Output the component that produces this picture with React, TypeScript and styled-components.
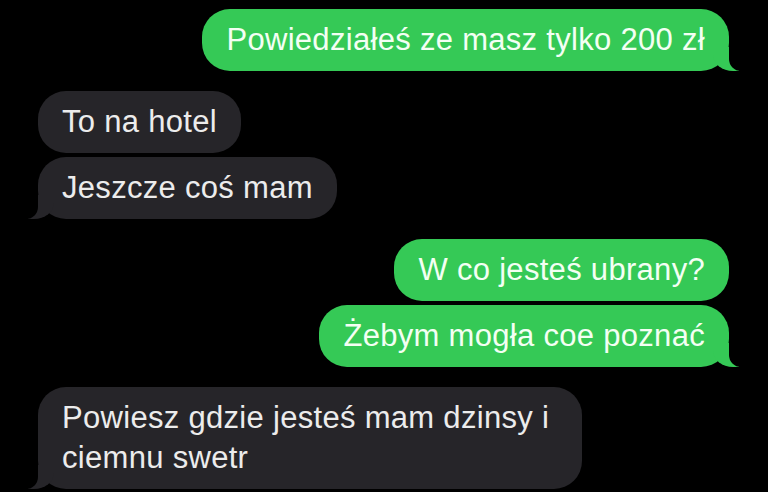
import React from 'react';
import styled, { createGlobalStyle, css } from 'styled-components';

type Side = 'me' | 'them';

interface Message {
	text: string
}

interface Group {
	side: Side
	messages: Message[]
}

const GREEN = '#35c956';
const GRAY = '#262529';

const GlobalStyle = createGlobalStyle`
	html, body {
		margin: 0;
		padding: 0;
		background: #000;
	}
	body {
		width: 768px;
		height: 492px;
		overflow: hidden;
		font-family: 'Liberation Sans', Arial, sans-serif;
	}
`;

const Thread = styled.div`
	display: flex;
	flex-direction: column;
	gap: 20px;
	padding: 9px 39px 0 38px;
	box-sizing: border-box;
	width: 768px;
	height: 492px;
	background: #000;
`;

const GroupColumn = styled.div<{ $side: Side }>`
	display: flex;
	flex-direction: column;
	gap: 4px;
	align-items: ${(p) => (p.$side === 'me' ? 'flex-end' : 'flex-start')};
`;

const meTail = css`
	&::before {
		right: -10px;
		border-bottom-left-radius: 20px 16px;
	}
	&::after {
		right: -36px;
		border-bottom-left-radius: 12px;
	}
`;

const themTail = css`
	&::before {
		left: -10px;
		border-bottom-right-radius: 20px 16px;
	}
	&::after {
		left: -36px;
		border-bottom-right-radius: 12px;
	}
`;

const Bubble = styled.div<{ $side: Side; $tail: boolean }>`
	position: relative;
	max-width: 544px;
	padding: 11px 24px;
	box-sizing: border-box;
	border-radius: 28px;
	font-size: 31px;
	line-height: 40px;
	letter-spacing: 0.3px;
	background: ${(p) => (p.$side === 'me' ? GREEN : GRAY)};
	color: ${(p) => (p.$side === 'me' ? '#f3fff3' : '#ececec')};

	${(p) => p.$tail && css`
		&::before,
		&::after {
			content: '';
			position: absolute;
			bottom: 0;
			height: 24px;
		}
		&::before {
			width: 26px;
			background: ${p.$side === 'me' ? GREEN : GRAY};
		}
		&::after {
			width: 36px;
			background: #000;
		}
		${p.$side === 'me' ? meTail : themTail}
	`}
`;

const groups: Group[] = [
	{ side: 'me', messages: [{ text: 'Powiedziałeś ze masz tylko 200 zł' }] },
	{ side: 'them', messages: [{ text: 'To na hotel' }, { text: 'Jeszcze coś mam' }] },
	{ side: 'me', messages: [{ text: 'W co jesteś ubrany?' }, { text: 'Żebym mogła coe poznać' }] },
	{ side: 'them', messages: [{ text: 'Powiesz gdzie jesteś mam dzinsy i ciemnu swetr' }] },
];

const App = () => (
	<>
		<GlobalStyle />
		<Thread>
			{groups.map((g, gi) => (
				<GroupColumn key={gi} $side={g.side}>
					{g.messages.map((m, mi) => (
						<Bubble key={mi} $side={g.side} $tail={mi === g.messages.length - 1}>
							{m.text}
						</Bubble>
					))}
				</GroupColumn>
			))}
		</Thread>
	</>
);

export default App;
